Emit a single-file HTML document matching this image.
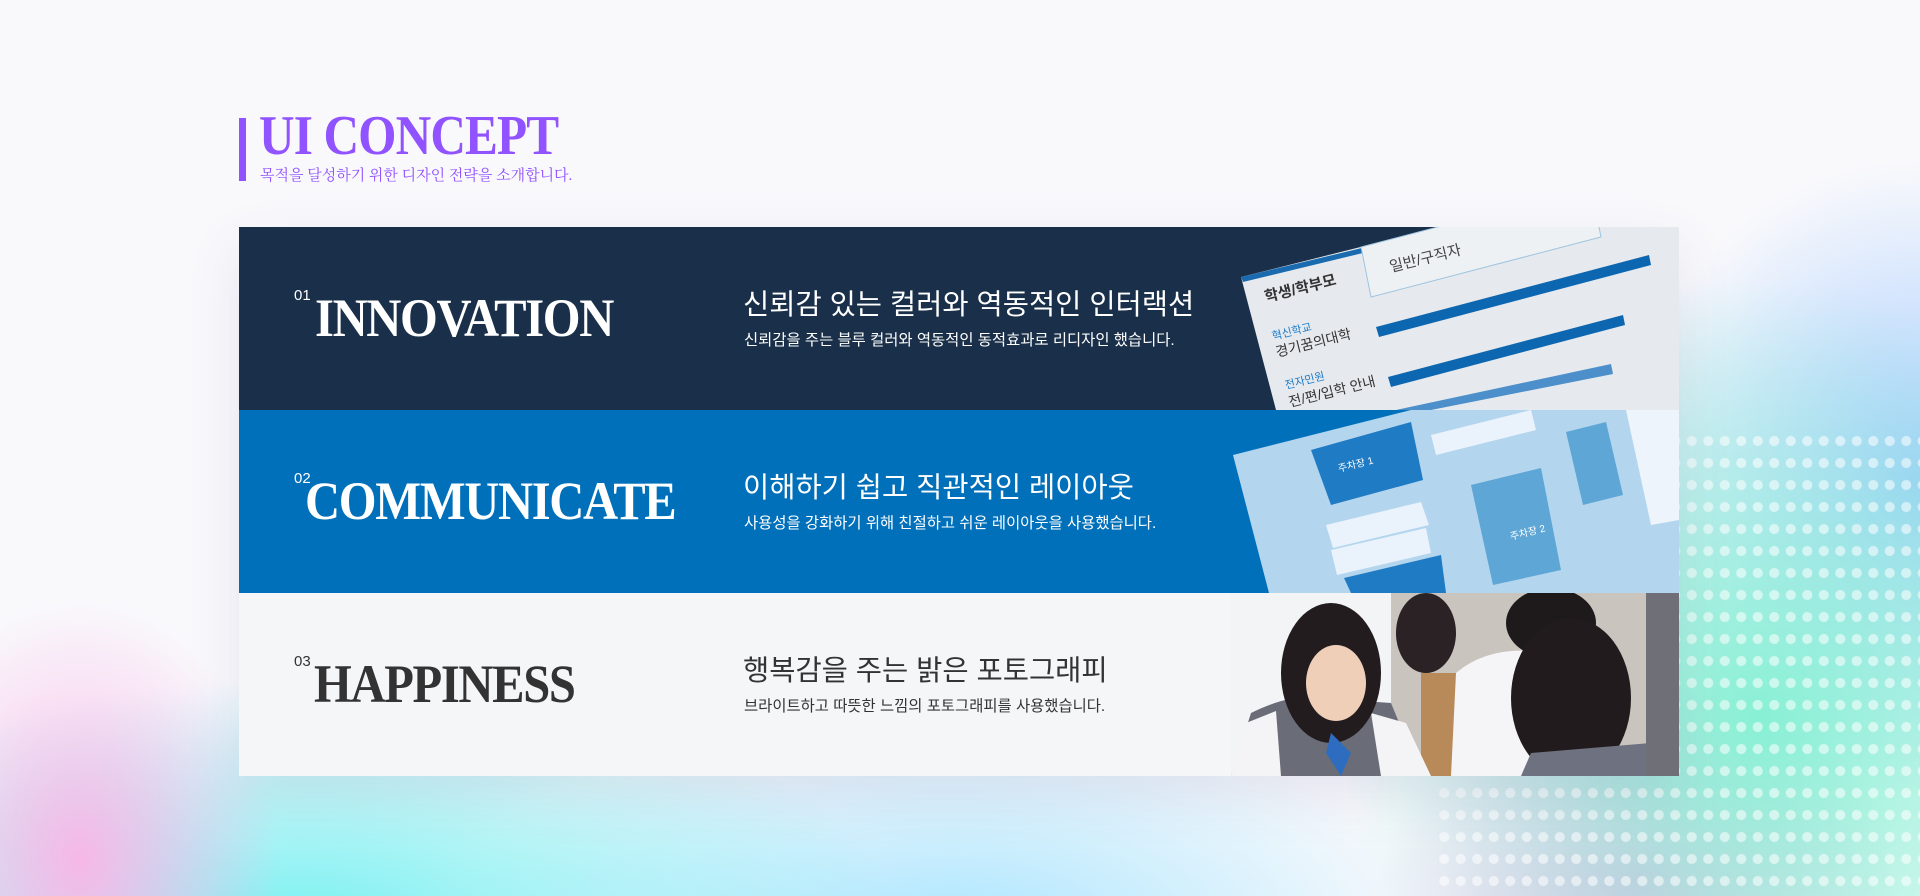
<!DOCTYPE html>
<html><head><meta charset="utf-8"><style>
*{margin:0;padding:0;box-sizing:border-box}
body{width:1920px;height:896px;overflow:hidden;position:relative;font-family:"Liberation Sans","Noto Sans CJK KR",sans-serif;
background:
radial-gradient(ellipse 200px 260px at 80px 860px,rgba(250,180,230,.95),rgba(250,180,230,0) 100%),
radial-gradient(ellipse 600px 240px at 300px 920px,rgba(110,240,240,.9),rgba(110,240,240,0) 100%),
radial-gradient(ellipse 500px 200px at 950px 920px,rgba(150,225,255,.75),rgba(150,225,255,0) 100%),
radial-gradient(ellipse 420px 440px at 1760px 720px,rgba(130,240,210,.95),rgba(130,240,210,0) 100%),
radial-gradient(ellipse 300px 320px at 1920px 480px,rgba(150,195,255,.85),rgba(150,195,255,0) 100%),
radial-gradient(ellipse 260px 200px at 1640px 880px,rgba(240,165,230,.8),rgba(240,165,230,0) 100%),
#f9f9fc;}
.dots{position:absolute;left:1436px;top:430px;width:484px;height:466px;
background-image:radial-gradient(circle,rgba(255,255,255,.55) 4.5px,transparent 5.5px);background-size:16.5px 22px}
.bar{position:absolute;left:239px;top:118px;width:7px;height:63px;background:#9152ff}
.title{position:absolute;left:259px;top:104px;font-family:"Liberation Serif",serif;font-weight:bold;font-size:56px;color:#9152ff;letter-spacing:-1px;transform:scaleX(.88);transform-origin:left top;white-space:nowrap}
.sub{position:absolute;left:260px;top:164px;font-family:"Liberation Serif","Noto Serif CJK SC",serif;font-size:15px;color:#9152ff}
.panel{position:absolute;left:239px;top:227px;width:1440px;height:549px;box-shadow:0 20px 50px rgba(80,80,140,.12)}
.row{position:relative;height:183px;overflow:hidden}
.num{position:absolute;left:55px;top:60px;font-size:15px}
.big{position:absolute;left:76px;top:60px;font-family:"Liberation Serif",serif;font-weight:bold;font-size:54px;letter-spacing:-1.5px;transform:scaleX(.9);transform-origin:left top;white-space:nowrap}
.kt{position:absolute;left:504px;top:55px;font-size:28.5px;white-space:nowrap}
.ks{position:absolute;left:505px;top:101px;font-size:15.4px;white-space:nowrap}
.img{position:absolute;left:992px;top:0;width:448px;height:183px;overflow:hidden}
</style></head><body>
<div class="dots"></div>
<div class="bar"></div>
<div class="title">UI CONCEPT</div>
<div class="sub">목적을 달성하기 위한 디자인 전략을 소개합니다.</div>
<div class="panel">
 <div class="row" style="background:#1a2f49;color:#fff">
  <div class="num">01</div><div class="big" style="left:76px">INNOVATION</div>
  <div class="kt">신뢰감 있는 컬러와 역동적인 인터랙션</div>
  <div class="ks">신뢰감을 주는 블루 컬러와 역동적인 동적효과로 리디자인 했습니다.</div>
  <div class="img">
   <svg width="448" height="183" viewBox="0 0 448 183">
    <polygon points="10,50 448,-60 448,183 45,183" fill="#e6eaee"/>
    <polygon points="10,50 135,20 136,25 12,55" fill="#1a6ab0"/>
    <polygon points="130,20 360,-40 370,10 140,70" fill="#eef1f4" stroke="#9fc4e0"/>
    <polygon points="145,100 418,28 420,38 148,110" fill="#0d66b0"/>
    <polygon points="157,150 392,88 394,98 160,160" fill="#0d66b0"/>
    <polygon points="165,183 380,137 382,147 200,183" fill="#4c8fcb"/>
    <text x="35" y="75" font-size="15" font-weight="bold" fill="#333" transform="rotate(-14 35 75)">학생/학부모</text>
    <text x="160" y="45" font-size="15" fill="#444" transform="rotate(-14 160 45)">일반/구직자</text>
    <text x="42" y="113" font-size="11" fill="#1a7ac9" transform="rotate(-14 42 113)">혁신학교</text>
    <text x="46" y="130" font-size="14" fill="#333" transform="rotate(-14 46 130)">경기꿈의대학</text>
    <text x="55" y="162" font-size="11" fill="#1a7ac9" transform="rotate(-14 55 162)">전자민원</text>
    <text x="59" y="180" font-size="14" fill="#333" transform="rotate(-14 59 180)">전/편/입학 안내</text>
   </svg>
  </div>
 </div>
 <div class="row" style="background:#0070bb;color:#fff">
  <div class="num">02</div><div class="big" style="left:66px">COMMUNICATE</div>
  <div class="kt">이해하기 쉽고 직관적인 레이아웃</div>
  <div class="ks">사용성을 강화하기 위해 친절하고 쉬운 레이아웃을 사용했습니다.</div>
  <div class="img">
   <svg width="448" height="183" viewBox="0 0 448 183">
    <polygon points="2,45 180,0 448,0 448,183 38,183" fill="#b3d5ee"/>
    <polygon points="80,40 180,12 192,70 100,95" fill="#1f7bc4"/>
    <polygon points="240,75 310,58 330,160 262,175" fill="#5ea6d6"/>
    <polygon points="335,22 375,12 392,85 352,95" fill="#5ea6d6"/>
    <polygon points="395,0 448,0 448,110 420,115" fill="#edf4fb"/>
    <polygon points="200,25 300,0 305,20 205,45" fill="#eaf3fb"/>
    <polygon points="95,115 190,92 198,115 102,138" fill="#eaf3fb"/>
    <polygon points="100,140 195,118 200,143 106,165" fill="#eaf3fb"/>
    <polygon points="113,168 210,145 215,183 120,183" fill="#1f7bc4"/>
    <text x="108" y="62" font-size="10" fill="#fff" transform="rotate(-14 108 62)">주차장 1</text>
    <text x="280" y="130" font-size="10" fill="#fff" transform="rotate(-14 280 130)">주차장 2</text>
   </svg>
  </div>
 </div>
 <div class="row" style="background:#f5f6f8;color:#333">
  <div class="num">03</div><div class="big" style="left:75px">HAPPINESS</div>
  <div class="kt">행복감을 주는 밝은 포토그래피</div>
  <div class="ks">브라이트하고 따뜻한 느낌의 포토그래피를 사용했습니다.</div>
  <div class="img">
   <svg width="448" height="183" viewBox="0 0 448 183">
    <rect x="0" y="0" width="448" height="183" fill="#f2f4f6"/>
    <rect x="160" y="0" width="288" height="183" fill="#c9c4bd"/>
    <rect x="190" y="80" width="100" height="103" fill="#b88a5a"/>
    <ellipse cx="195" cy="40" rx="30" ry="40" fill="#2a2225"/>
    <path d="M0,183 L20,120 Q60,100 90,105 L160,110 L190,183 Z" fill="#6a6d78"/>
    <path d="M0,183 L15,130 L45,118 L50,183 Z M140,120 L175,130 L200,183 L150,183 Z" fill="#f4f4f6"/>
    <ellipse cx="100" cy="80" rx="50" ry="70" fill="#231c1f"/>
    <ellipse cx="105" cy="90" rx="30" ry="38" fill="#f0cfb8"/>
    <path d="M100,140 L120,160 L110,183 L95,160 Z" fill="#2e6cc0"/>
    <path d="M220,183 L225,80 Q260,50 320,60 L350,183 Z" fill="#f5f5f7"/>
    <ellipse cx="320" cy="30" rx="45" ry="35" fill="#1e1a1c"/>
    <ellipse cx="340" cy="105" rx="60" ry="80" fill="#211b1d"/>
    <path d="M290,183 L300,160 L420,150 L448,183 Z" fill="#6d7180"/>
    <rect x="415" y="0" width="33" height="183" fill="#6e6f77"/>
   </svg>
  </div>
 </div>
</div>
</body></html>
